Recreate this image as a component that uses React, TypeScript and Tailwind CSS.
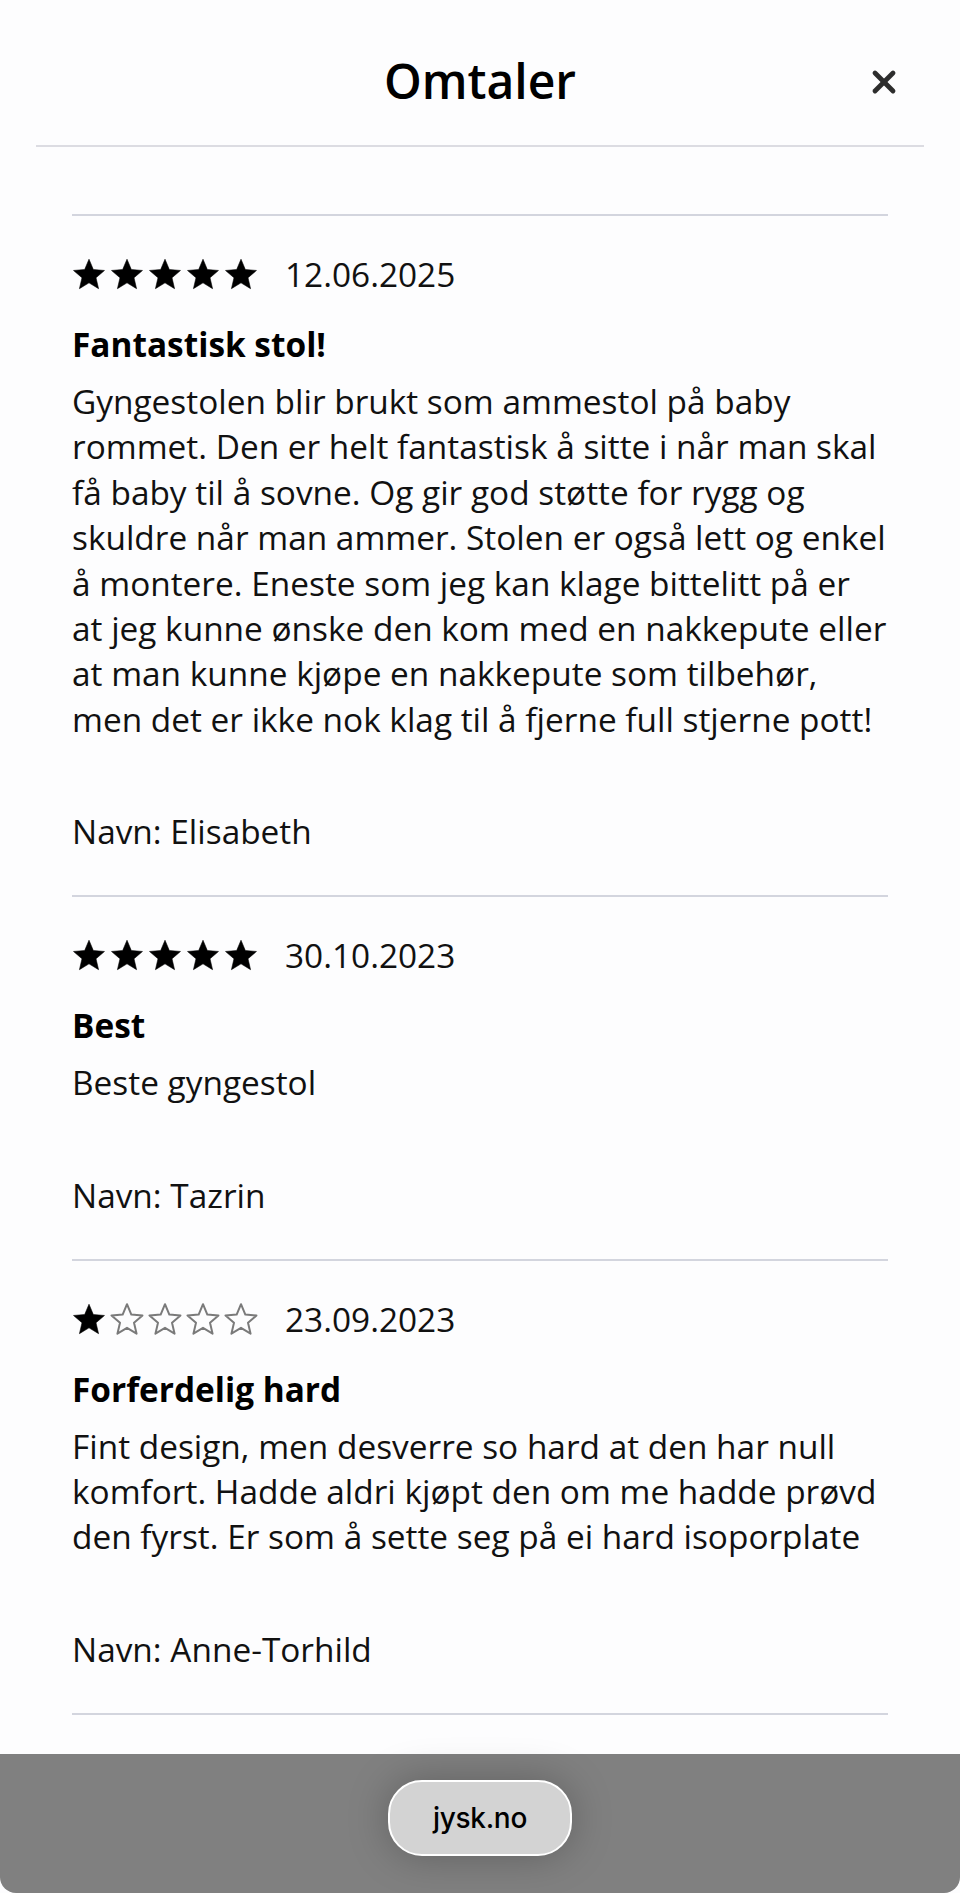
import { X } from 'lucide-react'

type Review = {
  rating: number
  date: string
  title: string
  body: string
  name: string
}

const reviews: Review[] = [
  {
    rating: 5,
    date: '12.06.2025',
    title: 'Fantastisk stol!',
    body: 'Gyngestolen blir brukt som ammestol på baby rommet. Den er helt fantastisk å sitte i når man skal få baby til å sovne. Og gir god støtte for rygg og skuldre når man ammer. Stolen er også lett og enkel å montere. Eneste som jeg kan klage bittelitt på er at jeg kunne ønske den kom med en nakkepute eller at man kunne kjøpe en nakkepute som tilbehør, men det er ikke nok klag til å fjerne full stjerne pott!',
    name: 'Elisabeth',
  },
  {
    rating: 5,
    date: '30.10.2023',
    title: 'Best',
    body: 'Beste gyngestol',
    name: 'Tazrin',
  },
  {
    rating: 1,
    date: '23.09.2023',
    title: 'Forferdelig hard',
    body: 'Fint design, men desverre so hard at den har null komfort. Hadde aldri kjøpt den om me hadde prøvd den fyrst. Er som å sette seg på ei hard isoporplate',
    name: 'Anne-Torhild',
  },
]

function Star({ filled }: { filled: boolean }) {
  return (
    <svg width="34" height="33" viewBox="0 0 24 23" className="shrink-0">
      <polygon
        points="12,0.7 15.06,7.99 22.94,8.65 16.95,13.81 18.76,21.5 12,17.4 5.24,21.5 7.05,13.81 1.06,8.65 8.94,7.99"
        fill={filled ? '#000' : 'none'}
        stroke={filled ? '#000' : '#7a7a7a'}
        strokeWidth={filled ? 0.4 : 1.4}
        strokeLinejoin="round"
      />
    </svg>
  )
}

function ReviewItem({ r }: { r: Review }) {
  return (
    <div className="pt-[36px] pb-[41px] border-b-2 border-[#d3d5de]">
      <div className="flex items-center h-[45px]">
        <div className="flex items-center gap-[4px]">
          {[1, 2, 3, 4, 5].map((i) => (
            <Star key={i} filled={i <= r.rating} />
          ))}
        </div>
        <span className="ml-[27px] text-[33.4px] leading-[45px] text-[#111]">{r.date}</span>
      </div>
      <h3 className="mt-[25px] text-[33.4px] leading-[45px] font-bold text-black">{r.title}</h3>
      <p className="mt-[12px] text-[33.4px] leading-[45.4px] text-[#111]">{r.body}</p>
      <p className="mt-[67px] text-[33.4px] leading-[45px] text-[#111]">Navn: {r.name}</p>
    </div>
  )
}

export default function App() {
  return (
    <div className="w-[960px] min-h-[1893px] bg-[#fdfdfe] flex flex-col font-['Open_Sans',sans-serif]">
      <header className="mx-[36px] h-[147px] border-b-2 border-[#dcdce2] relative flex items-center justify-center">
        <h1 className="text-[48px] font-semibold text-black mt-[16px]">Omtaler</h1>
        <button className="absolute right-[22px] top-[64px] text-[#2d2d2d]">
          <X size={36} strokeWidth={3.2} />
        </button>
      </header>
      <main className="flex-1 px-[72px] pt-[67px]">
        <div className="border-t-2 border-[#d3d5de]">
          {reviews.map((r) => (
            <ReviewItem key={r.date} r={r} />
          ))}
        </div>
      </main>
      <footer className="h-[139px] bg-[#808080] rounded-b-[16px] flex items-center justify-center">
        <div className="w-[184px] h-[76px] rounded-[34px] bg-[#d3d3d3] border-2 border-white shadow-[0_0_40px_rgba(0,0,0,0.25)] flex items-center justify-center -mt-[12px]">
          <span className="text-[28px] font-medium text-black font-['Inter',sans-serif] tracking-[-0.3px]">jysk.no</span>
        </div>
      </footer>
    </div>
  )
}
